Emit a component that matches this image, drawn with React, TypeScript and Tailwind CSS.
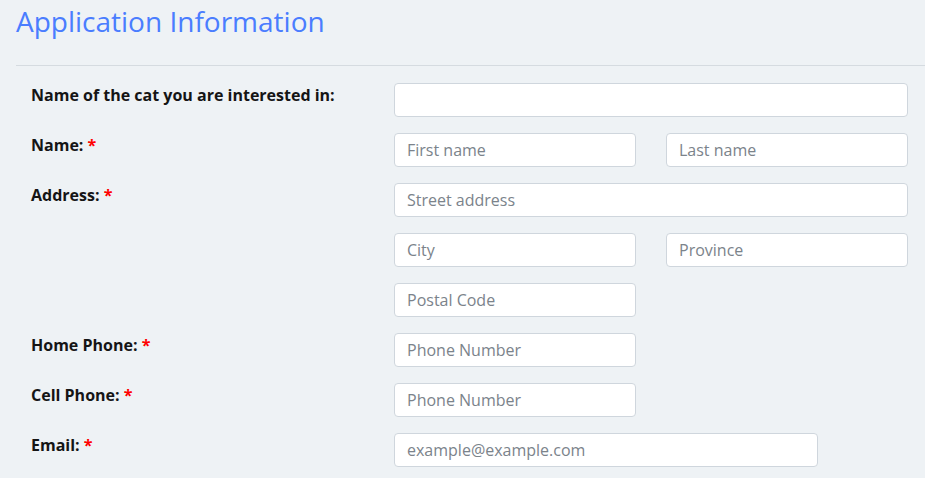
import React from "react";

function Req() {
  return <span className="text-[#ff0000]"> *</span>;
}

function Field({ placeholder, className = "" }: { placeholder?: string; className?: string }) {
  return (
    <input
      type="text"
      placeholder={placeholder}
      className={`h-[34px] rounded-[4px] border border-[#cfd6dd] bg-white px-[12px] text-[16px] text-[#333] placeholder:text-[#7b838b] outline-none ${className}`}
    />
  );
}

function Row({ label, children }: { label: React.ReactNode; children: React.ReactNode }) {
  return (
    <div className="flex">
      <div className="w-[363px] shrink-0 text-[16px] leading-[24px] font-bold text-[#151515]">{label}</div>
      <div className="flex flex-1 flex-col gap-[16px]">{children}</div>
    </div>
  );
}

export default function App() {
  return (
    <div className="min-h-screen bg-[#eef2f5] pl-[16px] font-['Open_Sans',sans-serif]">
      <h2 className="text-[28px] leading-[42px] text-[#4a7dff]">Application Information</h2>
      <div className="mt-[23px] border-t border-[#d5dbe0]" />
      <div className="flex flex-col gap-[16px] pl-[15px] pr-[17px] pt-[17px]">
        <Row label="Name of the cat you are interested in:">
          <Field className="w-full" />
        </Row>
        <Row label={<>Name:<Req /></>}>
          <div className="grid grid-cols-2 gap-[30px]">
            <Field placeholder="First name" />
            <Field placeholder="Last name" />
          </div>
        </Row>
        <Row label={<>Address:<Req /></>}>
          <Field placeholder="Street address" className="w-full" />
          <div className="grid grid-cols-2 gap-[30px]">
            <Field placeholder="City" />
            <Field placeholder="Province" />
          </div>
          <div className="grid grid-cols-2 gap-[30px]">
            <Field placeholder="Postal Code" />
          </div>
        </Row>
        <Row label={<>Home Phone:<Req /></>}>
          <div className="grid grid-cols-2 gap-[30px]">
            <Field placeholder="Phone Number" />
          </div>
        </Row>
        <Row label={<>Cell Phone:<Req /></>}>
          <div className="grid grid-cols-2 gap-[30px]">
            <Field placeholder="Phone Number" />
          </div>
        </Row>
        <Row label={<>Email:<Req /></>}>
          <Field placeholder="example@example.com" className="w-[424px]" />
        </Row>
      </div>
    </div>
  );
}
